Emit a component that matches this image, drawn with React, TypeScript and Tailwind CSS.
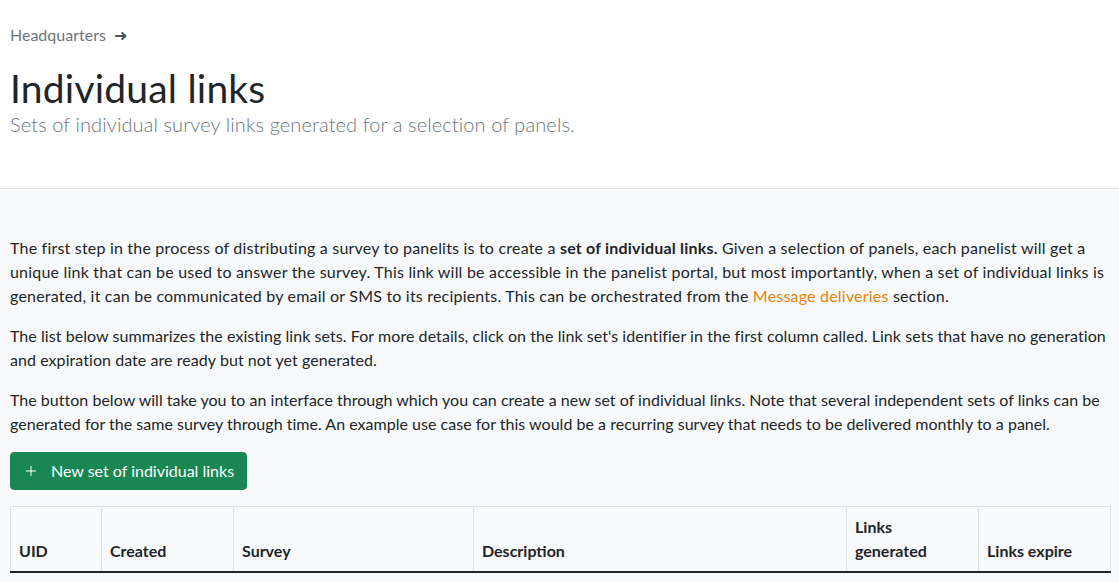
import { Plus } from "lucide-react";

const columns = [
  { label: "UID", width: "w-[91px]" },
  { label: "Created", width: "w-[132px]" },
  { label: "Survey", width: "w-[240px]" },
  { label: "Description", width: "w-[373px]" },
  { label: "Links generated", width: "w-[132px]" },
  { label: "Links expire", width: "w-[132px]" },
];

function Header() {
  return (
    <header className="bg-white border-b border-[#dee2e6] px-[10px] pt-[24px] pb-[50px]">
      <nav className="text-[16px] text-[#6c757d] leading-[22px] flex items-center gap-2">
        <span>Headquarters</span>
        <span className="text-[#495057]">➜</span>
      </nav>
      <h1 className="mt-[20px] text-[39px] leading-[44px] tracking-[0.2px] text-[#212529]">Individual links</h1>
      <p className="text-[20px] leading-[28px] font-light tracking-[0.1px] text-[#6c757d]">
        Sets of individual survey links generated for a selection of panels.
      </p>
    </header>
  );
}

function LinkSetsTable() {
  return (
    <table className="w-full table-fixed border-collapse border border-[#dee2e6] bg-[#f8f9fa]">
      <thead>
        <tr>
          {columns.map((col) => (
            <th
              key={col.label}
              className={`${col.width} border-x border-[#dee2e6] border-b-2 border-b-[#212529] p-2 align-bottom text-left font-bold text-[#212529] leading-6`}
            >
              {col.label === "Links generated" ? (
                <>
                  Links
                  <br />
                  generated
                </>
              ) : (
                col.label
              )}
            </th>
          ))}
        </tr>
      </thead>
    </table>
  );
}

export default function App() {
  return (
    <div className="min-h-screen bg-[#f8f9fa] font-['Lato',sans-serif] text-base text-[#212529]">
      <Header />
      <main className="px-[10px] pt-[47px] pb-10">
        <p className="mb-4 leading-6 whitespace-nowrap tracking-[0.2px]">
          The first step in the process of distributing a survey to panelits is to create a{" "}
          <strong className="font-bold">set of individual links.</strong> Given a selection of panels, each
          panelist will get a
          <br />
          unique link that can be used to answer the survey. This link will be accessible in the panelist portal,
          but most importantly, when a set of individual links is
          <br />
          generated, it can be communicated by email or SMS to its recipients. This can be orchestrated from the{" "}
          <a href="#" className="text-[#e8830c]">
            Message deliveries
          </a>{" "}
          section.
        </p>
        <p className="mb-4 leading-6 whitespace-nowrap tracking-[0.06px]">
          The list below summarizes the existing link sets. For more details, click on the link set's identifier
          in the first column called. Link sets that have no generation
          <br />
          and expiration date are ready but not yet generated.
        </p>
        <p className="mb-4 leading-6 whitespace-nowrap tracking-[0.02px]">
          The button below will take you to an interface through which you can create a new set of individual
          links. Note that several independent sets of links can be
          <br />
          generated for the same survey through time. An example use case for this would be a recurring survey
          that needs to be delivered monthly to a panel.
        </p>
        <button
          type="button"
          className="mb-4 inline-flex items-center gap-[12px] rounded bg-[#198754] border border-[#198754] px-[12px] py-[6px] leading-6 text-white"
        >
          <Plus size={16} strokeWidth={1.5} />
          New set of individual links
        </button>
        <LinkSetsTable />
      </main>
    </div>
  );
}
